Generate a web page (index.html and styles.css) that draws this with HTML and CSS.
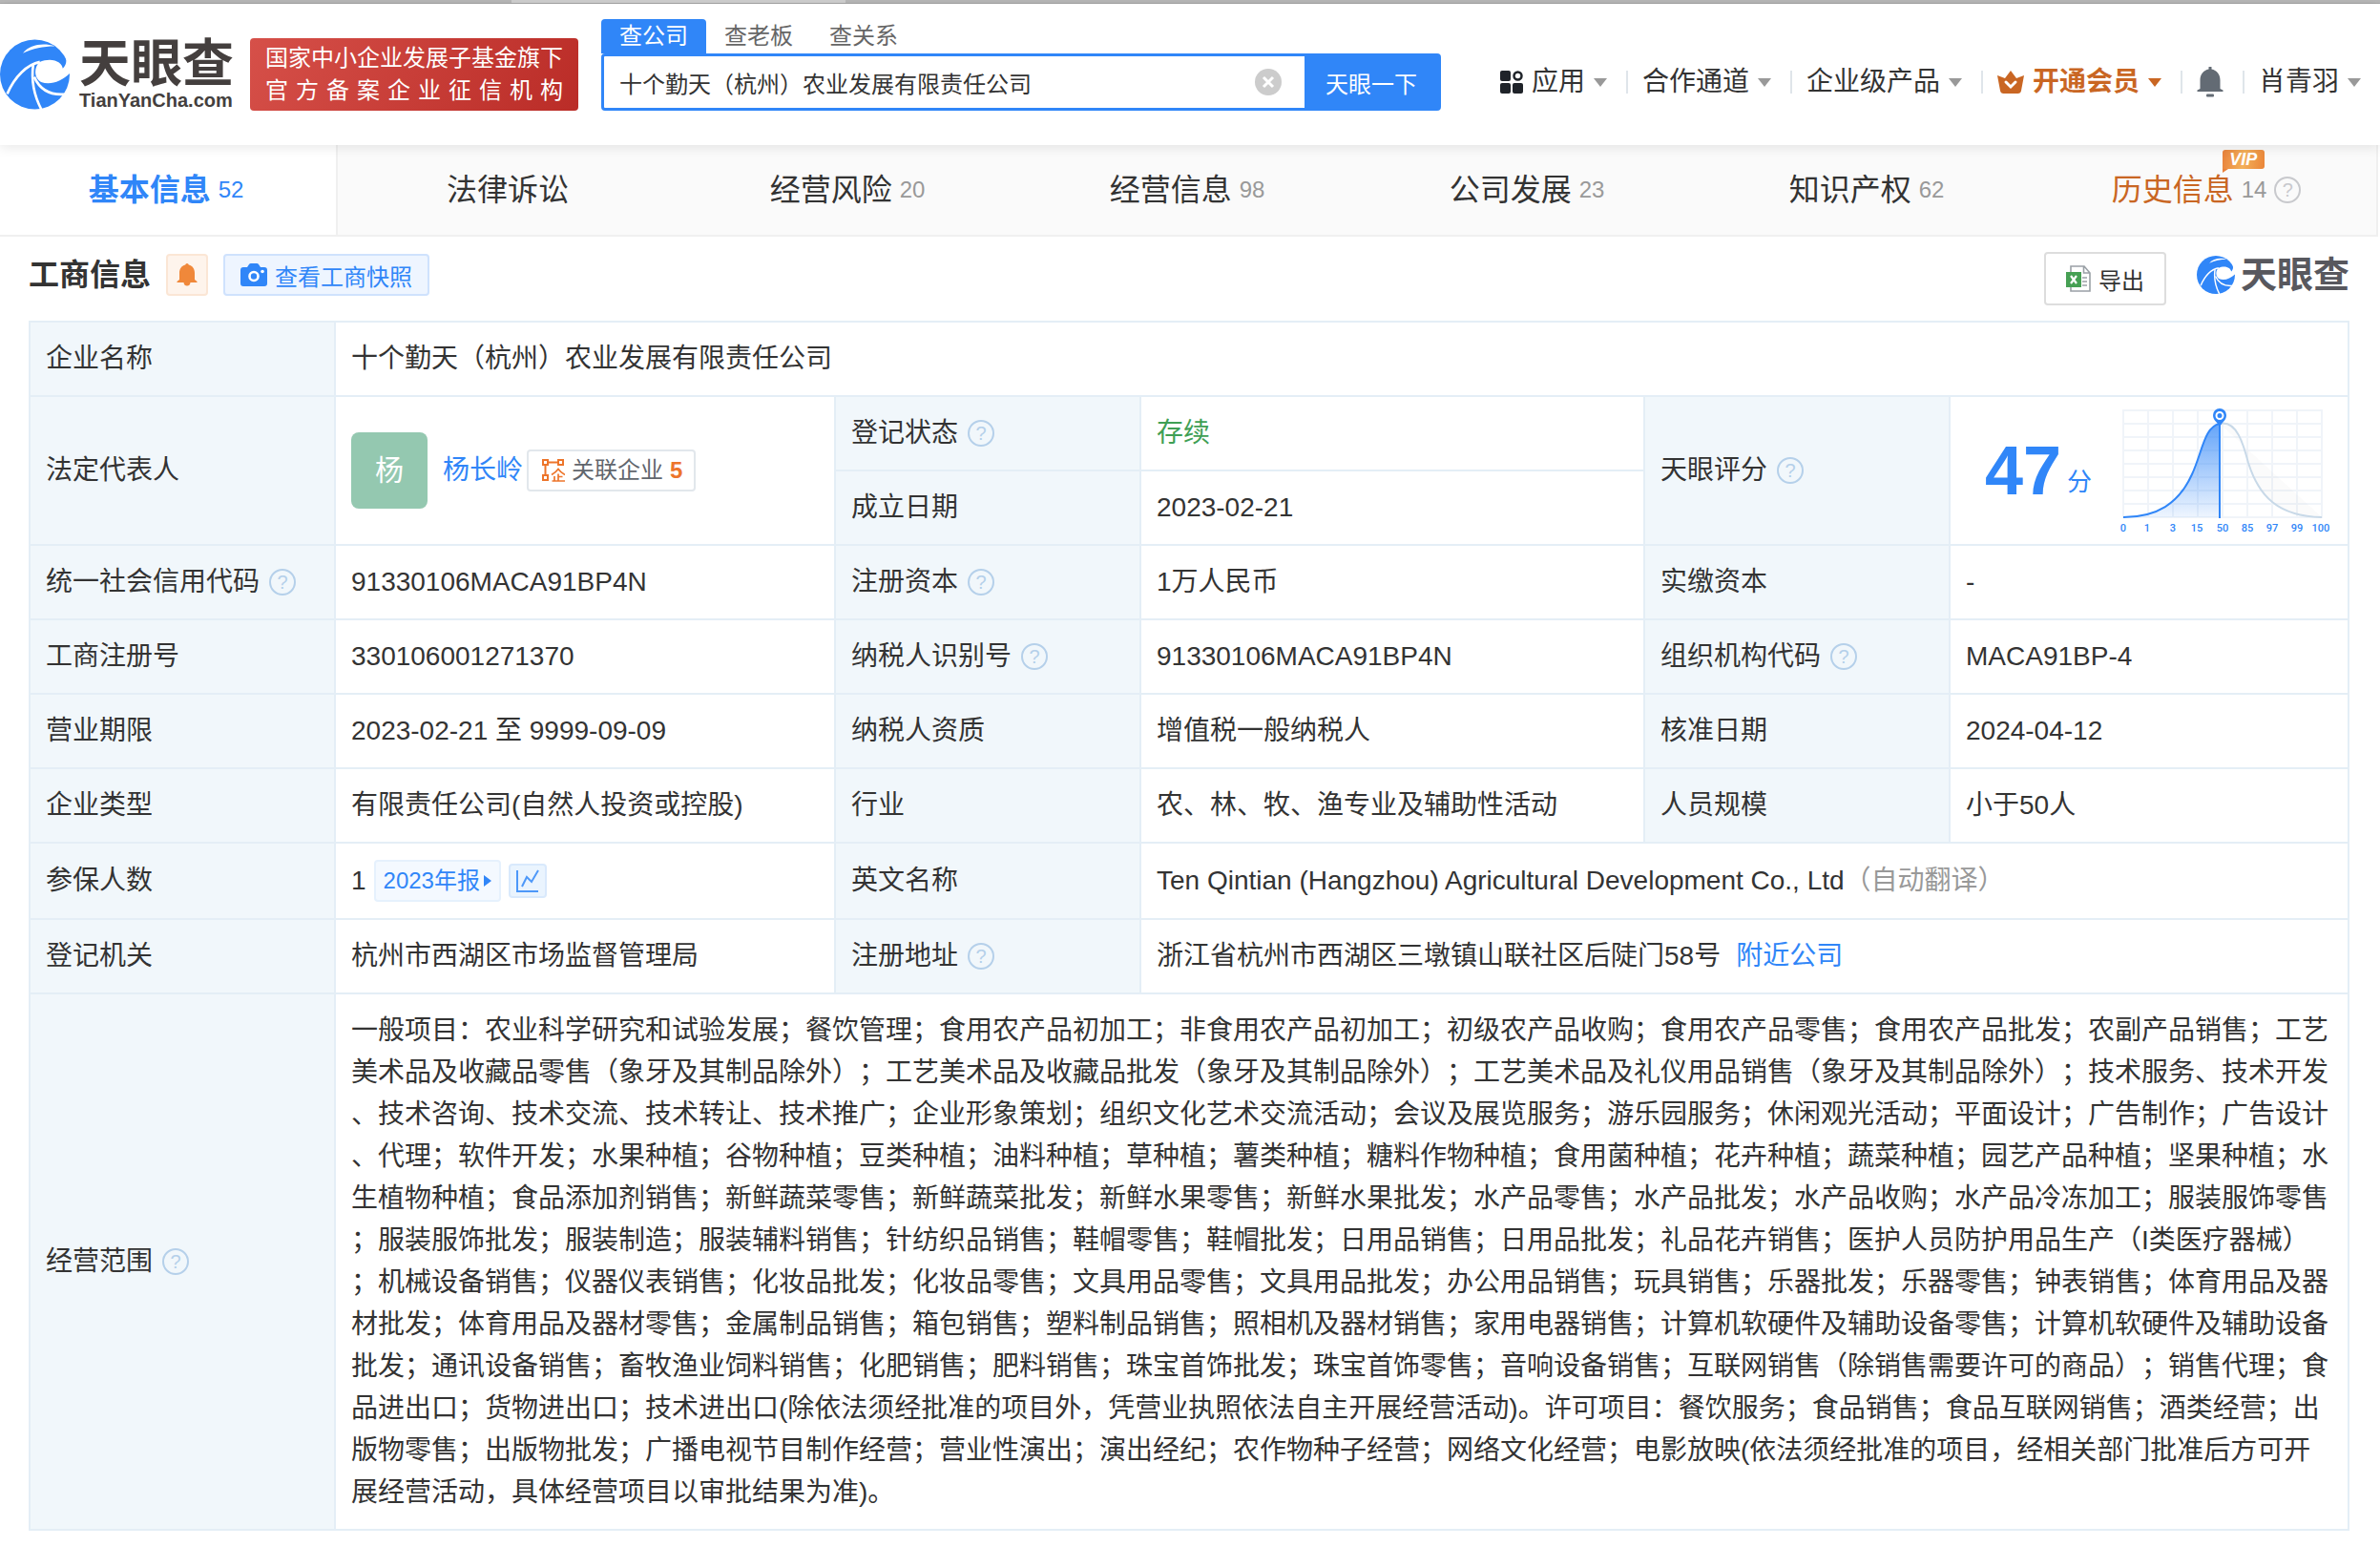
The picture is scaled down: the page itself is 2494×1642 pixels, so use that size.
FILE: index.html
```
<!DOCTYPE html>
<html lang="zh-CN">
<head>
    <meta charset="UTF-8">
    <meta name="viewport" content="width=device-width, initial-scale=1.0">
    <title>十个勤天（杭州）农业发展有限责任公司 - 天眼查</title>
    <link rel="stylesheet" href="styles.css">
</head>
<body>
    <svg class="sprite" aria-hidden="true">
        <symbol id="swirl" viewBox="-3 33 222 222">
            <circle cx="108" cy="144" r="111" fill="#3086f8"/>
            <path fill="#fff" d="M224 90 L207 92 C210 106 206 116 197 125 C196 106 164 86 122 105 C104 124 106 156 128 168 C160 180 196 164 224 136 Z"/>
            <path fill="#fff" d="M70 76 C92 48 136 42 172 54 C134 54 102 60 70 76 Z"/>
            <g fill="none" stroke="#fff" stroke-width="8">
                <path d="M124 104 C84 112 44 150 20 206"/>
                <path d="M103 112 C96 160 104 208 129 256"/>
                <path d="M106 152 C122 188 152 212 206 207"/>
            </g>
        </symbol>
    </svg>

    <div class="window-edge"></div>

    <header class="header">
        <a class="logo" href="#">
            <svg class="logo-mark"><use href="#swirl"/></svg>
            <span class="logo-text">
                <span class="logo-name">天眼查</span>
                <span class="logo-domain">TianYanCha.com</span>
            </span>
        </a>
        <div class="slogan">
            <div>国家中小企业发展子基金旗下</div>
            <div>官 方 备 案 企 业 征 信 机 构</div>
        </div>
        <div class="search">
            <div class="search-tabs">
                <a href="#" class="active">查公司</a>
                <a href="#">查老板</a>
                <a href="#">查关系</a>
            </div>
            <form class="search-box">
                <input type="text" aria-label="搜索公司" value="十个勤天（杭州）农业发展有限责任公司">
                <button type="button" class="search-clear" aria-label="清空">
                    <svg viewBox="0 0 28 28"><circle cx="14" cy="14" r="14" fill="#ccc"/><path d="M9 9 L19 19 M19 9 L9 19" stroke="#fff" stroke-width="3"/></svg>
                </button>
                <button type="submit" class="search-submit">天眼一下</button>
            </form>
        </div>
        <nav class="user-nav">
            <a href="#">
                <svg class="icon-apps" viewBox="0 0 24 24" fill="#1f2329"><rect width="11" height="11" rx="2"/><rect y="13" width="11" height="11" rx="2"/><rect x="13" y="13" width="11" height="11" rx="2"/><circle cx="18.500" cy="5.500" r="4" fill="none" stroke="#1f2329" stroke-width="2.500"/></svg>
                应用<i class="caret"></i>
            </a>
            <a href="#">合作通道<i class="caret"></i></a>
            <a href="#">企业级产品<i class="caret"></i></a>
            <a href="#" class="vip-link">
                <svg class="icon-crown" viewBox="0 0 28 24"><path fill="#c96623" d="M0 5 L8 8 L14 0 L20 8 L28 5 L25 21 Q24.500 24 21.500 24 H6.500 Q3.500 24 3 21 Z"/><path d="M9 12 L14 17 L19 12" fill="none" stroke="#fff" stroke-width="3" stroke-linecap="round"/></svg>
                开通会员<i class="caret"></i>
            </a>
            <a href="#" class="bell-link" aria-label="消息">
                <svg class="icon-bell" viewBox="0 0 28 32" fill="#636b74"><path d="M12.500 0 H15.500 V2.500 C21 3.500 24.500 8 24.500 14 V23 L27.500 24.500 V26 H.500 V24.500 L3.500 23 V14 C3.500 8 7 3.500 12.500 2.500 Z"/><rect x="10" y="28.500" width="8" height="3" rx="1"/></svg>
            </a>
            <a href="#">肖青羽<i class="caret"></i></a>
        </nav>
    </header>

    <nav class="tabs">
        <a href="#" class="active">基本信息<span class="count">52</span></a>
        <a href="#">法律诉讼</a>
        <a href="#">经营风险<span class="count">20</span></a>
        <a href="#">经营信息<span class="count">98</span></a>
        <a href="#">公司发展<span class="count">23</span></a>
        <a href="#">知识产权<span class="count">62</span></a>
        <a href="#" class="history"><span class="history-name">历史信息<span class="vip-badge">VIP</span></span><span class="count">14</span><span class="help">?</span></a>
    </nav>

    <main class="section">
        <div class="section-header">
            <div class="section-title">
                <h2>工商信息</h2>
                <button type="button" class="monitor" aria-label="监控">
                    <svg viewBox="0 0 22 24" fill="#f0883a"><path d="M11 0 Q12.500 0 12.800 1.500 C17 2.500 19 6 19 10 V17 L21.500 19 V20 H.500 V19 L3 17 V10 C3 6 5 2.500 9.200 1.500 Q9.500 0 11 0 Z"/><path d="M7.500 20 H14.500 Q14 23.500 11 23.500 Q8 23.500 7.500 20 Z"/></svg>
                </button>
                <button type="button" class="snapshot">
                    <svg viewBox="0 0 28 24"><path fill="#3086f8" d="M3 4 H7 L9 1 Q9.600 0 11 0 H17 Q18.400 0 19 1 L21 4 H25 Q28 4 28 7 V21 Q28 24 25 24 H3 Q0 24 0 21 V7 Q0 4 3 4 Z"/><circle cx="14" cy="13.500" r="4.500" fill="none" stroke="#fff" stroke-width="2.600"/><circle cx="23" cy="8.500" r="1.800" fill="#fff"/></svg>
                    查看工商快照
                </button>
            </div>
            <div class="section-tools">
                <button type="button" class="export">
                    <svg viewBox="0 0 26 28"><path d="M5 1 H19 L25 8 V27 H5 Z M18.500 1 V8 H25" fill="#fff" stroke="#9aa0a6" stroke-width="1.600"/><path d="M17 13 H22 M17 17 H22 M17 21 H22" stroke="#9aa0a6" stroke-width="1.600"/><rect y="7" width="16" height="16" fill="#46a054"/><path d="M5 11 L11 19 M11 11 L5 19" stroke="#fff" stroke-width="2.200"/></svg>
                    导出
                </button>
                <span class="watermark"><svg><use href="#swirl"/></svg>天眼查</span>
            </div>
        </div>

        <table class="info">
            <colgroup>
                <col class="col-label"><col class="col-first">
                <col class="col-label"><col class="col-second">
                <col class="col-label"><col>
            </colgroup>
            <tbody>
                <tr>
                    <th>企业名称</th>
                    <td colspan="5">十个勤天（杭州）农业发展有限责任公司</td>
                </tr>
                <tr>
                    <th rowspan="2">法定代表人</th>
                    <td rowspan="2">
                        <div class="person">
                            <span class="avatar">杨</span>
                            <a href="#">杨长岭</a>
                            <a href="#" class="related">
                                <svg viewBox="0 0 24 24" fill="none" stroke="#ed752b" stroke-width="2"><rect x="1" y="1" width="5" height="5"/><rect x="17" y="1" width="5" height="5"/><rect x="1" y="17" width="5" height="5"/><path d="M6 3.500 H17 M3.500 6 V17"/><path d="M10 16.500 Q14.500 14 17 10.500 Q19.500 14 24 16.500 M17 15.500 V23 M17 18.500 H21.500 M13 18 V23 M10.500 23 H24" stroke-width="1.700"/></svg>
                                关联企业<b>5</b>
                            </a>
                        </div>
                    </td>
                    <th>登记状态<span class="help">?</span></th>
                    <td class="status-ok">存续</td>
                    <th rowspan="2">天眼评分<span class="help">?</span></th>
                    <td rowspan="2" class="score-cell">
                        <div class="score">
                            <span class="score-value">47</span>
                            <span class="score-unit">分</span>
                            <svg class="score-chart" viewBox="0 0 224 134">
                                <defs>
                                    <linearGradient id="fill" x1="0" y1="0" x2="0" y2="1">
                                        <stop offset="0" stop-color="#3086f8" stop-opacity=".75"/>
                                        <stop offset="1" stop-color="#3086f8" stop-opacity=".08"/>
                                    </linearGradient>
                                </defs>
                                <path stroke="#f0f4f9" stroke-width="2" d="M4 4H214M4 18H214M4 32H214M4 46H214M4 60H214M4 74H214M4 88H214M4 102H214M4 116H214M5 4V116M31 4V116M57 4V116M83 4V116M109 4V116M135 4V116M161 4V116M187 4V116M213 4V116"/>
                                <path fill="#888" fill-opacity=".03" stroke="#c8d9e8" stroke-width="2" d="M106 18 C124 14 131 40 136 59 C147 94 167 115 213 116"/>
                                <path fill="url(#fill)" d="M5 116 C40 116 63 102 77 71 C88 47 90 21 106 18 V116 Z"/>
                                <path fill="none" stroke="#3086f8" stroke-width="2" d="M5 116 C40 116 63 102 77 71 C88 47 90 21 106 18 V117"/>
                                <path fill="#3086f8" d="M106 22 C104 16 99 15 99 9 A7 7 0 0 1 113 9 C113 15 108 16 106 22 Z"/>
                                <circle cx="106" cy="9.500" r="3.500" fill="#3086f8" stroke="#fff" stroke-width="2"/>
                                <g class="axis">
                                    <text x="5" y="131">0</text><text x="30" y="131">1</text><text x="57" y="131">3</text>
                                    <text x="82" y="131">15</text><text x="109" y="131">50</text><text x="135" y="131">85</text>
                                    <text x="161" y="131">97</text><text x="187" y="131">99</text><text x="212" y="131">100</text>
                                </g>
                            </svg>
                        </div>
                    </td>
                </tr>
                <tr>
                    <th>成立日期</th>
                    <td>2023-02-21</td>
                </tr>
                <tr>
                    <th>统一社会信用代码<span class="help">?</span></th>
                    <td>91330106MACA91BP4N</td>
                    <th>注册资本<span class="help">?</span></th>
                    <td>1万人民币</td>
                    <th>实缴资本</th>
                    <td>-</td>
                </tr>
                <tr>
                    <th>工商注册号</th>
                    <td>330106001271370</td>
                    <th>纳税人识别号<span class="help">?</span></th>
                    <td>91330106MACA91BP4N</td>
                    <th>组织机构代码<span class="help">?</span></th>
                    <td>MACA91BP-4</td>
                </tr>
                <tr>
                    <th>营业期限</th>
                    <td>2023-02-21 至 9999-09-09</td>
                    <th>纳税人资质</th>
                    <td>增值税一般纳税人</td>
                    <th>核准日期</th>
                    <td>2024-04-12</td>
                </tr>
                <tr>
                    <th>企业类型</th>
                    <td>有限责任公司(自然人投资或控股)</td>
                    <th>行业</th>
                    <td>农、林、牧、渔专业及辅助性活动</td>
                    <th>人员规模</th>
                    <td>小于50人</td>
                </tr>
                <tr>
                    <th>参保人数</th>
                    <td>
                        <div class="insured">
                            1
                            <a href="#" class="report">2023年报<i></i></a>
                            <a href="#" class="trend" aria-label="趋势">
                                <svg viewBox="0 0 24 24" fill="none" stroke="#4d98f9" stroke-width="2"><path d="M1 1 V23 H23"/><path d="M6 18 L11 8 L16 13 L23 1"/></svg>
                            </a>
                        </div>
                    </td>
                    <th>英文名称</th>
                    <td colspan="3">Ten Qintian (Hangzhou) Agricultural Development Co., Ltd<span class="note">（自动翻译）</span></td>
                </tr>
                <tr>
                    <th>登记机关</th>
                    <td>杭州市西湖区市场监督管理局</td>
                    <th>注册地址<span class="help">?</span></th>
                    <td colspan="3">浙江省杭州市西湖区三墩镇山联社区后陡门58号<a href="#" class="nearby">附近公司</a></td>
                </tr>
                <tr>
                    <th>经营范围<span class="help">?</span></th>
                    <td colspan="5" class="scope">一般项目：农业科学研究和试验发展；餐饮管理；食用农产品初加工；非食用农产品初加工；初级农产品收购；食用农产品零售；食用农产品批发；农副产品销售；工艺美术品及收藏品零售（象牙及其制品除外）；工艺美术品及收藏品批发（象牙及其制品除外）；工艺美术品及礼仪用品销售（象牙及其制品除外）；技术服务、技术开发、技术咨询、技术交流、技术转让、技术推广；企业形象策划；组织文化艺术交流活动；会议及展览服务；游乐园服务；休闲观光活动；平面设计；广告制作；广告设计、代理；软件开发；水果种植；谷物种植；豆类种植；油料种植；草种植；薯类种植；糖料作物种植；食用菌种植；花卉种植；蔬菜种植；园艺产品种植；坚果种植；水生植物种植；食品添加剂销售；新鲜蔬菜零售；新鲜蔬菜批发；新鲜水果零售；新鲜水果批发；水产品零售；水产品批发；水产品收购；水产品冷冻加工；服装服饰零售；服装服饰批发；服装制造；服装辅料销售；针纺织品销售；鞋帽零售；鞋帽批发；日用品销售；日用品批发；礼品花卉销售；医护人员防护用品生产（I类医疗器械）；机械设备销售；仪器仪表销售；化妆品批发；化妆品零售；文具用品零售；文具用品批发；办公用品销售；玩具销售；乐器批发；乐器零售；钟表销售；体育用品及器材批发；体育用品及器材零售；金属制品销售；箱包销售；塑料制品销售；照相机及器材销售；家用电器销售；计算机软硬件及辅助设备零售；计算机软硬件及辅助设备批发；通讯设备销售；畜牧渔业饲料销售；化肥销售；肥料销售；珠宝首饰批发；珠宝首饰零售；音响设备销售；互联网销售（除销售需要许可的商品）；销售代理；食品进出口；货物进出口；技术进出口(除依法须经批准的项目外，凭营业执照依法自主开展经营活动)。许可项目：餐饮服务；食品销售；食品互联网销售；酒类经营；出版物零售；出版物批发；广播电视节目制作经营；营业性演出；演出经纪；农作物种子经营；网络文化经营；电影放映(依法须经批准的项目，经相关部门批准后方可开展经营活动，具体经营项目以审批结果为准)。</td>
                </tr>
            </tbody>
        </table>
    </main>
</body>
</html>
```
FILE: styles.css
```
:root {
    --primary-color: #3086f8;
    --text-color: #333;
    --muted-color: #999;
    --vip-color: #c96623;
    --line-color: #e4eef6;
    --label-color: #f1f7fb;
}

* {
    box-sizing: border-box;
}

body {
    margin: 0;
    font-family: "Liberation Sans", "Noto Sans CJK SC", sans-serif;
    font-size: 28px;
    line-height: 44px;
    color: var(--text-color);
    background-color: white;
    text-spacing-trim: space-all;
}

a {
    color: var(--primary-color);
    text-decoration: none;
}

button,
input {
    font-family: inherit;
    font-size: 24px;
    color: inherit;
}

button {
    cursor: pointer;
}

.sprite {
    display: block;
    width: 0;
    height: 0;
}

.window-edge {
    height: 4px;
    background: linear-gradient(to right, #b8b8b8 536px, #d0d0d0 536px, #d0d0d0 886px, #b8b8b8 886px);
    border-bottom: 1px solid #a5a5a5;
}

/* header */
.header {
    position: relative;
    z-index: 1;
    display: flex;
    align-items: flex-end;
    padding: 16px 20px 36px 0;
    background-color: white;
    box-shadow: 0 2px 12px rgba(0,0,0,0.1);
}

.logo {
    display: flex;
    gap: 10px;
    margin-right: 17px;
    color: #443f3e;
}

.logo-mark {
    width: 73px;
    height: 76px;
}

.logo-text {
    display: flex;
    flex-direction: column;
    width: 162px;
    font-weight: bold;
    white-space: nowrap;
}

.logo-name {
    font-size: 54px;
    line-height: 54px;
}

.logo-domain {
    font-size: 20px;
    line-height: 22px;
}

.slogan {
    width: 344px;
    height: 76px;
    margin-right: 24px;
    padding: 4px 16px;
    border-radius: 4px;
    background: linear-gradient(120deg, #d65049, #ba2c27);
    color: white;
    font-size: 24px;
    line-height: 34px;
    white-space: nowrap;
    text-align-last: justify;
}

.search {
    flex: 0 1 880px;
}

.search-tabs {
    display: flex;
}

.search-tabs a {
    padding: 0 19px;
    border-radius: 4px 4px 0 0;
    color: #666;
    font-size: 24px;
    line-height: 36px;
}

.search-tabs .active {
    background-color: var(--primary-color);
    color: white;
}

.search-box {
    display: flex;
    height: 60px;
    border: 3px solid var(--primary-color);
    border-radius: 4px;
}

.search-box input {
    flex: 1;
    min-width: 0;
    padding: 0 16px;
    border: none;
    outline: none;
    background: none;
}

.search-clear {
    display: flex;
    align-items: center;
    padding: 0 24px;
    border: none;
    background: none;
}

.search-clear svg {
    width: 28px;
    height: 28px;
}

.search-submit {
    width: 140px;
    border: none;
    background-color: var(--primary-color);
    color: white;
}

.user-nav {
    display: flex;
    align-items: center;
    height: 60px;
    margin-left: auto;
    white-space: nowrap;
}

.user-nav a {
    display: flex;
    align-items: center;
    gap: 9px;
    color: var(--text-color);
}

.user-nav a + a::before {
    content: "";
    width: 2px;
    height: 24px;
    margin: 0 6px 0 20px;
    background-color: #dfe5ea;
}

.user-nav .vip-link {
    color: var(--vip-color);
    font-weight: bold;
}

.caret {
    border: 7px solid transparent;
    border-top: 9px solid #999;
    border-bottom: none;
}

.vip-link .caret {
    border-top-color: var(--vip-color);
}

.icon-apps {
    width: 24px;
    height: 24px;
}

.icon-crown {
    width: 28px;
    height: 24px;
}

.icon-bell {
    width: 28px;
    height: 32px;
}

/* tabs */
.tabs {
    display: flex;
    margin: 0 2px 0 -4px;
    border-bottom: 2px solid #f0f0f0;
    background-color: #fafafa;
}

.tabs a {
    display: flex;
    flex: 1;
    align-items: center;
    justify-content: center;
    gap: 8px;
    height: 94px;
    color: var(--text-color);
    font-size: 32px;
    white-space: nowrap;
}

.tabs .active {
    border-right: 2px solid #f0f0f0;
    background-color: white;
    color: var(--primary-color);
    font-weight: bold;
}

.count {
    color: var(--muted-color);
    font-size: 24px;
    font-weight: normal;
}

.active .count {
    color: var(--primary-color);
}

.tabs .history {
    border-right: 2px solid #f0f0f0;
    color: var(--vip-color);
}

.history-name {
    position: relative;
}

.vip-badge {
    position: absolute;
    right: -32px;
    top: -20px;
    width: 44px;
    border-radius: 3px 3px 3px 0;
    background: linear-gradient(100deg, #e8813a, #f3b05a 50%, #ea8437);
    color: white;
    font-size: 18px;
    font-style: italic;
    font-weight: bold;
    line-height: 20px;
    text-align: center;
}

.vip-badge::after {
    content: "";
    position: absolute;
    left: 0;
    top: 100%;
    border-top: 4px solid #e8813a;
    border-right: 6px solid transparent;
}

.help {
    display: inline-flex;
    align-items: center;
    justify-content: center;
    width: 28px;
    height: 28px;
    border: 2px solid #b5d0ea;
    border-radius: 50%;
    color: #b5d0ea;
    font-size: 20px;
    line-height: 24px;
    vertical-align: middle;
}

th .help {
    margin: -4px 0 0 10px;
}

.history .help {
    border-color: #c8c9cd;
    color: #c8c9cd;
}

/* company info */
.section {
    padding: 0 32px 32px 30px;
}

.section-header {
    display: flex;
    justify-content: space-between;
    padding: 16px 0 24px;
}

.section-title,
.section-tools {
    display: flex;
    height: 48px;
}

.section-title {
    align-items: center;
    gap: 16px;
}

.section-title h2 {
    margin: 0;
    font-size: 32px;
}

.section-title button {
    display: flex;
    align-items: center;
    justify-content: center;
    gap: 8px;
    height: 44px;
    border-radius: 4px;
}

.section-title .monitor {
    width: 44px;
    padding: 0;
    border: 2px solid #fbe6d5;
    background-color: #fef4ec;
}

.monitor svg {
    width: 22px;
    height: 24px;
}

.section-title .snapshot {
    padding: 0 16px;
    border: 2px solid #cfe2fd;
    background-color: #eef5ff;
    color: var(--primary-color);
}

.snapshot svg {
    width: 28px;
    height: 24px;
}

.section-tools {
    gap: 32px;
}

.export {
    display: flex;
    align-items: center;
    justify-content: center;
    gap: 8px;
    width: 128px;
    height: 56px;
    padding: 0;
    border: 2px solid #ddd;
    border-radius: 4px;
    background-color: white;
}

.export svg {
    width: 26px;
    height: 28px;
}

.watermark {
    display: flex;
    align-items: center;
    gap: 6px;
    color: #58585e;
    font-size: 38px;
    font-weight: bold;
}

.watermark svg {
    width: 40px;
    height: 40px;
}

.info {
    width: 100%;
    table-layout: fixed;
    border-collapse: collapse;
}

.col-label {
    width: 320px;
}

.col-first {
    width: 524px;
}

.col-second {
    width: 528px;
}

.info th,
.info td {
    padding: 16px;
    border: 2px solid var(--line-color);
    text-align: left;
    font-weight: normal;
}

.info th {
    background-color: var(--label-color);
}

.person {
    display: flex;
    align-items: center;
    gap: 4px;
}

.avatar {
    width: 80px;
    margin-right: 12px;
    border-radius: 8px;
    background-color: #94c8b0;
    color: white;
    font-size: 30px;
    line-height: 80px;
    text-align: center;
}

.related {
    display: flex;
    align-items: center;
    gap: 7px;
    height: 44px;
    padding: 0 12px 0 14px;
    border: 2px solid #e2e7ec;
    border-radius: 4px;
    color: #61666d;
    font-size: 24px;
}

.related svg {
    width: 24px;
    height: 24px;
}

.related b {
    color: #ed752b;
}

.info .status-ok {
    color: #3f9f55;
}

.info .score-cell {
    padding: 0 16px;
}

.score {
    display: flex;
    align-items: center;
    justify-content: flex-end;
    color: var(--primary-color);
}

.score-value {
    font-size: 72px;
    font-weight: bold;
    line-height: 72px;
}

.score-unit {
    margin: 24px 28px 0 6px;
    font-size: 26px;
}

.score-chart {
    width: 224px;
    height: 134px;
}

.axis {
    fill: var(--primary-color);
    font: 500 11px Roboto, sans-serif;
    text-anchor: middle;
}

.insured {
    display: flex;
    align-items: center;
    gap: 8px;
    height: 46px;
}

.report {
    display: flex;
    align-items: center;
    gap: 4px;
    height: 44px;
    padding: 0 8px;
    border: 2px solid #e6f1fd;
    border-radius: 4px;
    background-color: #f4f9ff;
    font-size: 24px;
}

.report i {
    border: 6px solid transparent;
    border-left: 8px solid var(--primary-color);
    border-right: none;
}

.trend {
    display: flex;
    align-items: center;
    justify-content: center;
    width: 40px;
    height: 36px;
    border: 2px solid #d9e9fc;
    border-radius: 4px;
    background-color: #eaf4fe;
}

.trend svg {
    width: 24px;
    height: 24px;
}

.note {
    color: var(--muted-color);
}

.nearby {
    margin-left: 16px;
}

.info .scope {
    line-break: anywhere;
    word-break: break-all;
}
```
